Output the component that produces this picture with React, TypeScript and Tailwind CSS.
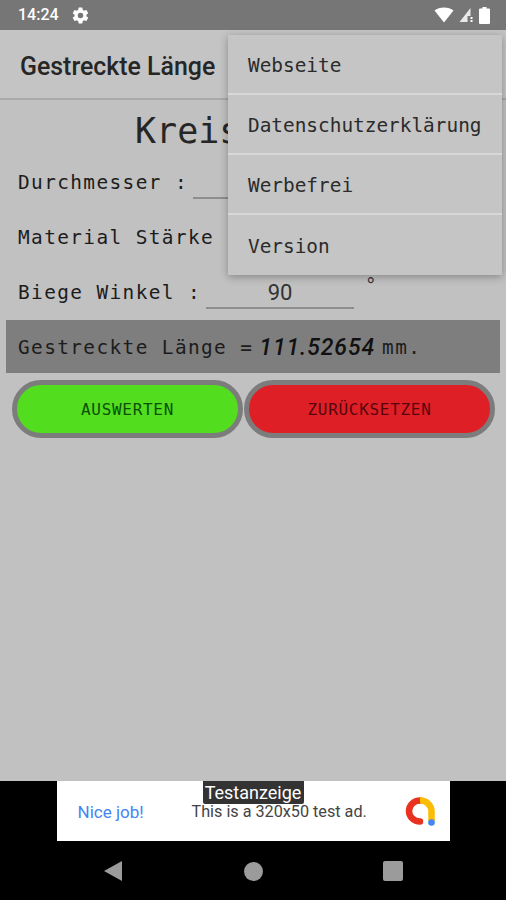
import React from "react";

const mono = "font-['DejaVu_Sans_Mono','Liberation_Mono',monospace]";

function FormRow({ label, labelWidth, value, unit }: { label: string; labelWidth: string; value?: string; unit?: string }) {
  return (
    <div className={`flex h-[55px] items-center pl-[18px] text-[19.4px] tracking-[1.4px] text-[#1c1c1c] ${mono}`}>
      <span className={`shrink-0 whitespace-pre ${labelWidth}`}>{label}</span>
      <div className="mt-[12px] flex h-[32px] w-[148px] items-center justify-center self-start border-b-2 border-[#8e8e8e] font-['Roboto',sans-serif] text-[22px] tracking-normal text-[#333]">
        {value}
      </div>
      <span className="ml-[11px] -translate-y-[7px] text-[19px] text-[#333]">{unit}</span>
    </div>
  );
}

function WifiIcon() {
  return (
    <svg width="20" height="16" viewBox="0 0 20 16" fill="#fff">
      <path d="M0.5 3.5C3 1.6 6.3 0.5 10 0.5s7 1.1 9.5 3L10 15.5z" />
    </svg>
  );
}

function SignalIcon() {
  return (
    <svg width="15" height="16" viewBox="0 0 15 16" fill="#fff">
      <path d="M11.5 1v8h-3v6H0.5z" opacity="0.85" />
      <rect x="11.500" y="10" width="2" height="2" />
      <rect x="11.500" y="13" width="2" height="2" />
    </svg>
  );
}

function BatteryIcon() {
  return (
    <svg width="11" height="17" viewBox="0 0 11 17" fill="#fff">
      <path d="M3.5 0h4v1.5H10a1 1 0 0 1 1 1V16a1 1 0 0 1-1 1H1a1 1 0 0 1-1-1V2.500a1 1 0 0 1 1-1h2.500z" />
    </svg>
  );
}

function GearIcon() {
  return (
    <svg width="19" height="19" viewBox="0 0 24 24" fill="#fff">
      <path d="M19.4 13c.04-.32.1-.66.1-1s-.06-.68-.1-1l2.100-1.650a.5.500 0 0 0 .12-.64l-2-3.460a.5.500 0 0 0-.6-.22l-2.500 1a7.300 7.300 0 0 0-1.700-1l-.38-2.650A.49.490 0 0 0 13.960 2h-4a.49.490 0 0 0-.49.420l-.38 2.650a7.700 7.700 0 0 0-1.700 1l-2.500-1a.5.500 0 0 0-.6.220l-2 3.460a.5.500 0 0 0 .12.640L4.530 11c-.04.320-.1.660-.1 1s.06.680.1 1l-2.110 1.650a.5.500 0 0 0-.12.640l2 3.460a.5.500 0 0 0 .6.220l2.500-1c.52.400 1.080.730 1.700 1l.38 2.650c.04.240.25.420.49.420h4c.25 0 .45-.18.49-.420l.38-2.650a7.700 7.700 0 0 0 1.700-1l2.500 1a.5.500 0 0 0 .6-.220l2-3.460a.5.500 0 0 0-.12-.640zM12 15.500a3.500 3.500 0 1 1 0-7 3.500 3.500 0 0 1 0 7z" />
    </svg>
  );
}

function AdLogo() {
  return (
    <svg width="31" height="30" viewBox="0 0 31 30" fill="none">
      <path d="M15 3.500A11 10.500 0 1 0 15 24.500" stroke="#e8321f" strokeWidth="6.500" strokeLinecap="round" />
      <path d="M15 3.500A11 11 0 0 1 26.500 14.500V24" stroke="#fbbc04" strokeWidth="6.500" />
      <circle cx="26.500" cy="25.500" r="3.300" fill="#4285f4" />
    </svg>
  );
}

export default function App() {
  const menu = ["Webseite", "Datenschutzerklärung", "Werbefrei", "Version"];

  return (
    <div className="relative flex h-[900px] w-[506px] flex-col overflow-hidden bg-[#c1c1c1]">
      {/* Status bar */}
      <div className="flex h-[30px] shrink-0 items-center bg-[#767676] pl-[18px] pr-[16px]">
        <span className="font-['Roboto',sans-serif] text-[16px] font-medium text-white">14:24</span>
        <span className="ml-[12px]"><GearIcon /></span>
        <div className="ml-auto flex items-center gap-[5px]">
          <WifiIcon />
          <SignalIcon />
          <BatteryIcon />
        </div>
      </div>

      {/* App bar */}
      <div className="flex h-[70px] shrink-0 items-center border-b-2 border-[#a9a9a9] bg-[#c4c4c4] pl-[20px] pt-[5px] font-['Roboto',sans-serif] text-[24.9px] font-medium text-[#262626]">
        Gestreckte Länge
      </div>

      {/* Form */}
      <div className="flex-1">
        <div className={`h-[55px] pl-[135px] pt-[8px] text-[35px] leading-[46px] text-[#262626] ${mono}`}>Kreis</div>
        <FormRow label="Durchmesser :" labelWidth="w-[175px]" />
        <FormRow label="Material Stärke :" labelWidth="w-[230px]" />
        <FormRow label="Biege Winkel :" labelWidth="w-[188px]" value="90" unit="°" />

        <div className={`mx-[6px] flex h-[53px] items-center bg-[#7e7e7e] pl-[12px] pt-[3px] text-[19.4px] tracking-[1.4px] text-[#1c1c1c] ${mono}`}>
          <span className="whitespace-pre">Gestreckte Länge =</span>
          <span className="ml-[6px] font-['Roboto',sans-serif] text-[23px] font-medium italic tracking-[0.9px] text-[#111]">111.52654</span>
          <span className="ml-[7px] whitespace-pre">mm.</span>
        </div>

        <div className="mt-[7px] flex gap-[1px] pl-[12px]">
          <button className={`flex h-[58px] w-[231px] items-center justify-center rounded-full border-[5px] border-[#7c7c7c] bg-[#52dd1f] pt-[2px] text-[16px] tracking-[0.7px] text-[#0b4f06] ${mono}`}>
            AUSWERTEN
          </button>
          <button className={`flex h-[58px] w-[251px] items-center justify-center rounded-full border-[5px] border-[#7c7c7c] bg-[#df1f26] pt-[2px] text-[16px] tracking-[0.7px] text-[#55050d] ${mono}`}>
            ZURÜCKSETZEN
          </button>
        </div>
      </div>

      {/* Ad banner */}
      <div className="flex h-[61px] shrink-0 justify-center bg-black">
        <div className="relative flex h-[60px] w-[393px] items-center bg-white pl-[21px] pr-[14px] pt-[3px] font-['Roboto',sans-serif]">
          <span className="w-[114px] text-[17px] text-[#4285f4]">Nice job!</span>
          <span className="text-[16.2px] text-[#444]">This is a 320x50 test ad.</span>
          <span className="ml-auto -translate-y-[1px]"><AdLogo /></span>
          <span className="absolute left-[146px] top-0 flex h-[23px] w-[101px] items-center justify-center rounded-b-[2px] bg-[#333] text-[18px] text-white">Testanzeige</span>
        </div>
      </div>

      {/* Nav bar */}
      <div className="flex h-[58px] shrink-0 items-center bg-black pl-[103px]">
        <svg width="20" height="22" viewBox="0 0 20 22" fill="#9b9b9b"><path d="M19 1v20L1 11z" /></svg>
        <span className="ml-[121px] h-[19px] w-[19px] rounded-full bg-[#9b9b9b]" />
        <span className="ml-[120px] h-[20px] w-[20px] rounded-[2px] bg-[#9b9b9b]" />
      </div>

      {/* Overflow menu */}
      <div className={`absolute left-[228px] top-[35px] w-[274px] bg-[#c5c5c5] text-[19.4px] text-[#2b2b2b] shadow-[0_2px_8px_rgba(0,0,0,0.3)] ${mono}`}>
        {menu.map((item, i) => (
          <div key={item} className={`flex h-[60px] items-center pl-[20px] pt-[4px] ${i < 3 ? "border-b-2 border-[#d8d8d8]" : ""}`}>
            {item}
          </div>
        ))}
      </div>
    </div>
  );
}
